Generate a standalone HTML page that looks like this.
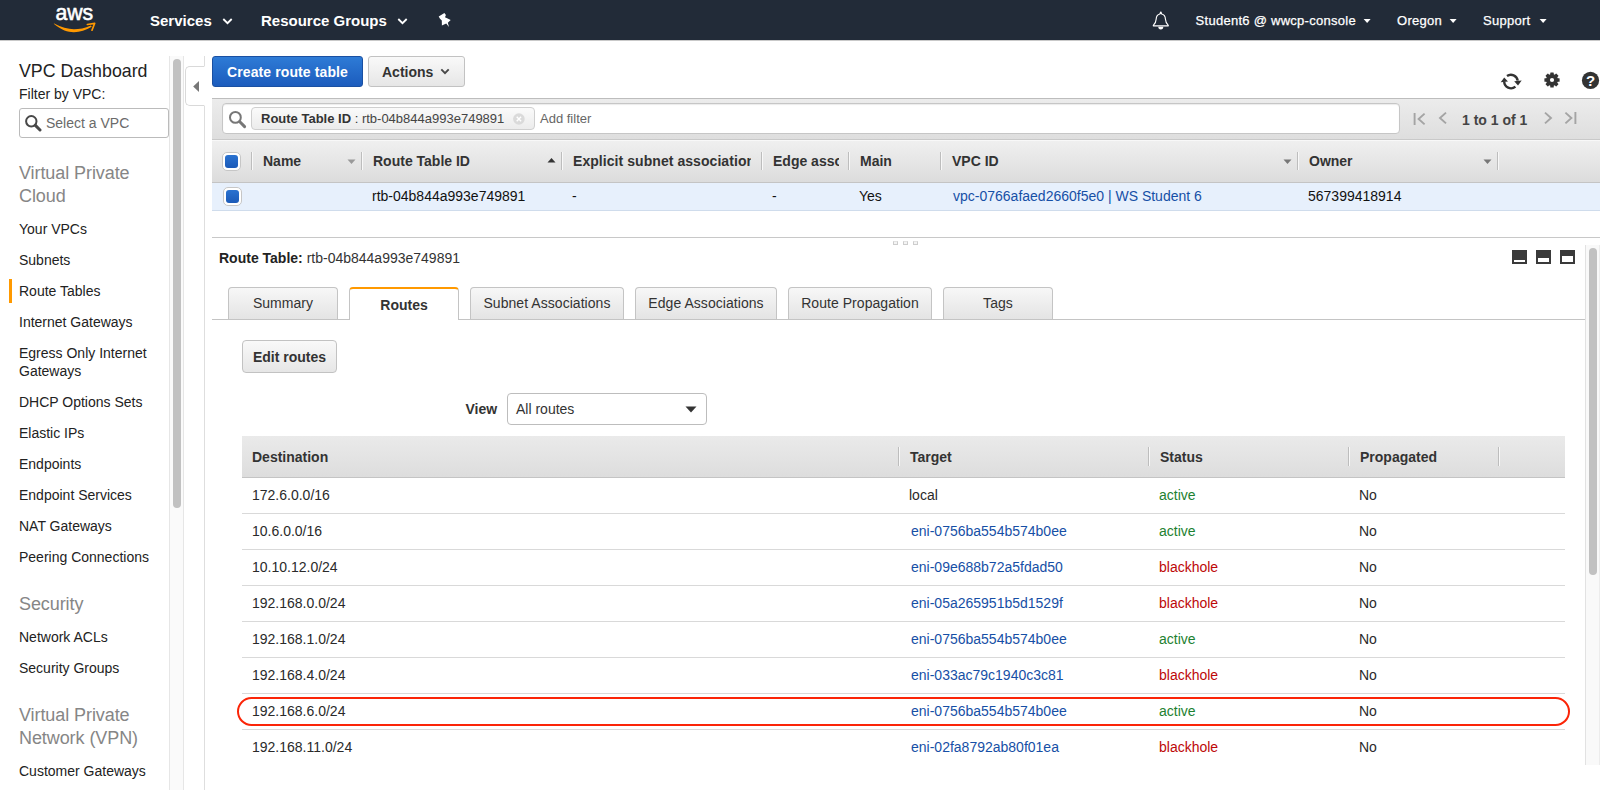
<!DOCTYPE html>
<html>
<head>
<meta charset="utf-8">
<title>VPC Route Tables</title>
<style>
*{box-sizing:border-box;margin:0;padding:0}
html,body{width:1600px;height:790px;overflow:hidden;background:#fff;font-family:"Liberation Sans",sans-serif;font-size:14px;color:#222}
.abs{position:absolute}
#nav{position:absolute;left:0;top:0;width:1600px;height:40px;background:#222b38;color:#fff}
#nav .t{position:absolute;top:12px;font-size:15px;font-weight:bold;color:#fff;white-space:nowrap}
#nav .r{position:absolute;top:13px;font-size:13px;color:#fff;white-space:nowrap;letter-spacing:0.27px;-webkit-text-stroke:0.25px #fff}
#nav svg{position:absolute}
/* sidebar */
#side{position:absolute;left:0;top:41px;width:169px;height:749px;background:#fff}
#side .h1{position:absolute;left:19px;font-size:17.8px;color:#222;white-space:nowrap}
#side .sec{position:absolute;left:19px;font-size:18px;line-height:23px;color:#868686;letter-spacing:-0.08px}
#side .it{position:absolute;left:19px;font-size:14px;line-height:17px;color:#222}
/* main */
.btn{position:absolute;border-radius:3px;font-weight:bold;font-size:14px;white-space:nowrap;text-align:center}
.th{position:absolute;top:153px;font-weight:bold;font-size:14px;color:#333;white-space:nowrap}
.td{position:absolute;top:188px;font-size:14px;color:#111;white-space:nowrap}
.sep{position:absolute;top:152px;width:1px;height:18px;background:#bdbdbd;box-shadow:1px 0 0 #f8f8f8}
.tab{letter-spacing:0.05px;position:absolute;top:287px;height:32px;border:1px solid #c4c4c4;border-bottom:none;border-radius:4px 4px 0 0;background:linear-gradient(#f7f7f7,#e4e4e4);font-size:14px;color:#333;text-align:center;line-height:30px;white-space:nowrap}
.rth{position:absolute;top:449px;font-weight:bold;font-size:14px;color:#333;white-space:nowrap}
.rrow{position:absolute;left:242px;width:1323px;height:36px;border-bottom:1px solid #d9d9d9}
.rrow span{position:absolute;top:9px;font-size:14px;white-space:nowrap;color:#2a2a2a}
.rrow .a{color:#164fa6}
.rrow .g{color:#1d8131}
.rrow .b{color:#bd0808}
</style>
</head>
<body>
<!-- NAV -->
<div id="nav">
  <svg style="left:50px;top:4px" width="50" height="32" viewBox="0 0 50 32">
    <text x="5.4" y="16.4" font-family="Liberation Sans, sans-serif" font-size="21.8" fill="#fff" stroke="#fff" stroke-width="0.55" textLength="37.8" lengthAdjust="spacingAndGlyphs">aws</text>
    <path d="M3.7 19.8 C 12 26.6, 18 28.3, 24 28.2 C 30 28.1, 36 26.2, 41.7 22.7 L 40.9 21.5 C 35 24.3, 29 25.3, 24 25.3 C 18 25.3, 11 23.5, 4.2 19.6 Z" fill="#f90"/>
    <path d="M37.4 20.5 L44.7 19.3 L42 26.2" fill="none" stroke="#f90" stroke-width="1.7" stroke-linecap="round" stroke-linejoin="round"/>
  </svg>
  <div class="t" style="left:150px">Services</div>
  <svg style="left:222px;top:17px" width="11" height="9" viewBox="0 0 11 9"><path d="M1.3 2 L5.5 6.2 L9.7 2" fill="none" stroke="#fff" stroke-width="1.8"/></svg>
  <div class="t" style="left:261px">Resource Groups</div>
  <svg style="left:397px;top:17px" width="11" height="9" viewBox="0 0 11 9"><path d="M1.3 2 L5.5 6.2 L9.7 2" fill="none" stroke="#fff" stroke-width="1.8"/></svg>
  <svg style="left:437px;top:12px" width="16" height="16" viewBox="0 0 16 16"><path d="M1.7 4.6 L7.4 1 L8.9 3 L8 5.2 L13.7 8 L10.8 10.8 L12 15 L9.2 11.4 L4.9 13.4 L4.8 8.6 L3 6.8 Z" fill="#fff"/></svg>

  <svg style="left:1152px;top:11px" width="18" height="19" viewBox="0 0 18 19"><path d="M8.8 2.1 C9.5 2.1 9.7 2.5 9.7 3 C12.2 3.5 13.3 5.4 13.4 8 C13.6 11.2 14.4 12.8 16.3 14.4 L16.3 14.8 L1.3 14.8 L1.3 14.4 C3.2 12.8 4 11.2 4.2 8 C4.3 5.4 5.4 3.5 7.9 3 C7.9 2.5 8.1 2.1 8.8 2.1 Z" fill="none" stroke="#fff" stroke-width="1.15" stroke-linejoin="round"/><circle cx="8.8" cy="1.5" r="0.9" fill="#fff"/><path d="M6.3 15.8 A2.5 2.7 0 0 0 11.3 15.8 Z" fill="#fff"/></svg>
  <div class="r" style="left:1195.6px">Student6 @ wwcp-console</div>
  <svg style="left:1362px;top:18px" width="10" height="6" viewBox="0 0 10 6"><path d="M1.6 1 L8.6 1 L5.1 5 Z" fill="#fff"/></svg>
  <div class="r" style="left:1397px">Oregon</div>
  <svg style="left:1448px;top:18px" width="10" height="6" viewBox="0 0 10 6"><path d="M1.6 1 L8.6 1 L5.1 5 Z" fill="#fff"/></svg>
  <div class="r" style="left:1483px">Support</div>
  <svg style="left:1538px;top:18px" width="10" height="6" viewBox="0 0 10 6"><path d="M1.6 1 L8.6 1 L5.1 5 Z" fill="#fff"/></svg>
</div>
<div class="abs" style="left:0;top:40px;width:1600px;height:1px;background:#c9c9c9"></div>

<!-- SIDEBAR -->
<div id="side">
  <div class="h1" style="top:20px">VPC Dashboard</div>
  <div class="it" style="top:45px;font-size:14px">Filter by VPC:</div>
  <div class="abs" style="left:19px;top:67px;width:150px;height:30px;border:1px solid #bbb;border-radius:3px;background:#fff"></div>
  <svg class="abs" style="left:24px;top:73px" width="18" height="18" viewBox="0 0 18 18"><circle cx="7.3" cy="7.3" r="5.2" fill="none" stroke="#484848" stroke-width="2"/><path d="M11.4 11.4 L16 16" stroke="#484848" stroke-width="3" stroke-linecap="round"/></svg>
  <div class="it" style="left:46px;top:74px;color:#6a6a6a">Select a VPC</div>

  <div class="sec" style="top:121px">Virtual Private<br>Cloud</div>
  <div class="it" style="top:180px">Your VPCs</div>
  <div class="it" style="top:211px">Subnets</div>
  <div class="abs" style="left:9px;top:238px;width:3px;height:24px;background:#f90"></div>
  <div class="it" style="top:242px">Route Tables</div>
  <div class="it" style="top:273px">Internet Gateways</div>
  <div class="it" style="top:303px;line-height:18px">Egress Only Internet<br>Gateways</div>
  <div class="it" style="top:353px">DHCP Options Sets</div>
  <div class="it" style="top:384px">Elastic IPs</div>
  <div class="it" style="top:415px">Endpoints</div>
  <div class="it" style="top:446px">Endpoint Services</div>
  <div class="it" style="top:477px">NAT Gateways</div>
  <div class="it" style="top:508px">Peering Connections</div>
  <div class="sec" style="top:552px">Security</div>
  <div class="it" style="top:588px">Network ACLs</div>
  <div class="it" style="top:619px">Security Groups</div>
  <div class="sec" style="top:663px">Virtual Private<br>Network (VPN)</div>
  <div class="it" style="top:721.7px">Customer Gateways</div>
</div>
<!-- sidebar borders / scrollbar -->
<div class="abs" style="left:169px;top:56px;width:15px;height:734px;background:#fafafa;border-left:1px solid #e6e6e6;border-right:1px solid #e6e6e6"></div>
<div class="abs" style="left:173px;top:59px;width:8px;height:449px;border-radius:4px;background:#c1c1c1"></div>
<div class="abs" style="left:204px;top:56px;width:1px;height:734px;background:#dedede"></div>
<div class="abs" style="left:185px;top:66px;width:20px;height:40px;border:1px solid #d9d9d9;border-right:1px solid #fff;border-radius:5px 0 0 5px;background:#fff"></div>
<svg class="abs" style="left:192px;top:80px" width="8" height="13" viewBox="0 0 8 13"><path d="M7 1 L7 12 L1.2 6.5 Z" fill="#777"/></svg>

<!-- MAIN -->

<!-- toolbar buttons -->
<div class="btn" style="left:212px;top:56px;width:151px;height:31px;background:linear-gradient(#2e7bd6,#1c5cbd);border:1px solid #1a50a2;color:#fff;line-height:31px;letter-spacing:0.1px">Create route table</div>
<div class="btn" style="left:368px;top:56px;width:97px;height:31px;background:linear-gradient(#f9f9f9,#e6e6e6);border:1px solid #c2c2c2;color:#333;line-height:31px;text-align:left;padding-left:13px">Actions</div>
<svg class="abs" style="left:439.5px;top:67.5px" width="10" height="8" viewBox="0 0 10 8"><path d="M1.3 1.3 L5 5.2 L8.7 1.3" fill="none" stroke="#484848" stroke-width="1.9"/></svg>

<!-- right icons -->
<svg class="abs" style="left:1499px;top:70px" width="24" height="22" viewBox="0 0 24 22">
  <path d="M8.0 6.0 A6.8 6.8 0 0 1 18.7 10.6" fill="none" stroke="#333" stroke-width="2.4"/>
  <path d="M5.2 11.6 A6.8 6.8 0 0 0 16.4 16.7" fill="none" stroke="#333" stroke-width="2.4"/>
  <path d="M15.2 11.2 L22.7 10.5 L19 15.4 Z" fill="#333"/>
  <path d="M1.7 12.2 L5.2 7.6 L9 11.6 Z" fill="#333"/>
</svg>
<svg class="abs" style="left:1543px;top:70.9px" width="18" height="18" viewBox="0 0 18 18">
  <g fill="#333" transform="translate(9,9)">
    <rect x="-1.75" y="-7.6" width="3.5" height="15.2" rx="0.5"/>
    <rect x="-1.75" y="-7.6" width="3.5" height="15.2" rx="0.5" transform="rotate(45)"/>
    <rect x="-1.75" y="-7.6" width="3.5" height="15.2" rx="0.5" transform="rotate(90)"/>
    <rect x="-1.75" y="-7.6" width="3.5" height="15.2" rx="0.5" transform="rotate(135)"/>
    <circle r="6"/>
    <circle r="2.1" fill="#fff"/>
  </g>
</svg>
<svg class="abs" style="left:1581px;top:71px" width="19" height="19" viewBox="0 0 19 19">
  <circle cx="9.5" cy="9.4" r="8.6" fill="#333"/>
  <text x="9.6" y="14.8" text-anchor="middle" font-family="Liberation Sans, sans-serif" font-weight="bold" font-size="15" fill="#fff">?</text>
</svg>

<!-- filter bar -->
<div class="abs" style="left:212px;top:98px;width:1388px;height:41px;border-top:1px solid #bdbdbd;background:linear-gradient(#ececec,#dedede)"></div>
<div class="abs" style="left:222px;top:103px;width:1178px;height:31px;border:1px solid #c6c6c6;border-radius:4px;background:#fff;box-shadow:inset 0 1px 1px rgba(0,0,0,.08)"></div>
<svg class="abs" style="left:228px;top:110px" width="19" height="19" viewBox="0 0 19 19"><circle cx="7.4" cy="7.4" r="5.4" fill="none" stroke="#777" stroke-width="2"/><path d="M11.8 11.8 L16.6 16.6" stroke="#777" stroke-width="3" stroke-linecap="round"/></svg>
<div class="abs" style="left:251px;top:107px;width:284px;height:23px;border:1px solid #cfcfcf;border-radius:4px;background:linear-gradient(#fafafa,#ececec)"></div>
<div class="abs" style="left:261px;top:111px;font-size:13px;color:#333;white-space:nowrap"><b>Route Table ID</b> : <span style="color:#444">rtb-04b844a993e749891</span></div>
<svg class="abs" style="left:512px;top:112px" width="14" height="14" viewBox="0 0 14 14"><circle cx="6.9" cy="7" r="5.8" fill="#dadada"/><path d="M4.7 4.8 L9.1 9.2 M9.1 4.8 L4.7 9.2" stroke="#fff" stroke-width="1.4"/></svg>
<div class="abs" style="left:540px;top:111px;font-size:13px;color:#666;white-space:nowrap">Add filter</div>

<!-- pagination -->
<svg class="abs" style="left:1412px;top:110.5px" width="16" height="16" viewBox="0 0 16 16"><path d="M2.6 2 L2.6 14 M12.6 2.6 L6.6 8 L12.6 13.4" fill="none" stroke="#a4a4a4" stroke-width="1.9"/></svg>
<svg class="abs" style="left:1435px;top:110px" width="16" height="16" viewBox="0 0 16 16"><path d="M11 2.6 L5 8 L11 13.4" fill="none" stroke="#a4a4a4" stroke-width="1.9"/></svg>
<div class="abs" style="left:1462px;top:111.5px;font-size:14px;font-weight:bold;color:#444;white-space:nowrap">1 to 1 of 1</div>
<svg class="abs" style="left:1540px;top:110px" width="16" height="16" viewBox="0 0 16 16"><path d="M5 2.6 L11 8 L5 13.4" fill="none" stroke="#a4a4a4" stroke-width="1.9"/></svg>
<svg class="abs" style="left:1562px;top:110px" width="16" height="16" viewBox="0 0 16 16"><path d="M13.4 2 L13.4 14 M3.4 2.6 L9.4 8 L3.4 13.4" fill="none" stroke="#a4a4a4" stroke-width="1.9"/></svg>

<!-- table header -->
<div class="abs" style="left:212px;top:139px;width:1388px;height:44px;border-top:1px solid #c9c9c9;border-bottom:1px solid #c4c4c4;background:linear-gradient(#f0f0f0,#dcdcdc);box-shadow:inset 0 1px 0 #f8f8f8"></div>
<div class="abs" style="left:222px;top:152px;width:19px;height:19px;border:1px solid #c6c6c6;border-radius:5px;background:#fff"></div>
<div class="abs" style="left:225px;top:155px;width:13px;height:13px;border-radius:3px;background:linear-gradient(#2a72d0,#1b5ab8)"></div>
<div class="sep" style="left:251px"></div>
<div class="th" style="left:263px">Name</div>
<svg class="abs" style="left:347.3px;top:158.5px" width="9" height="6" viewBox="0 0 9 6"><path d="M0.5 0.5 L8.5 0.5 L4.5 5 Z" fill="#999"/></svg>
<div class="sep" style="left:361px"></div>
<div class="th" style="left:373px">Route Table ID</div>
<svg class="abs" style="left:547px;top:157px" width="9" height="6" viewBox="0 0 9 6"><path d="M0.5 5.5 L8.5 5.5 L4.5 1 Z" fill="#333"/></svg>
<div class="sep" style="left:561px"></div>
<div class="th" style="left:573px;width:177.5px;overflow:hidden;letter-spacing:0.06px">Explicit subnet association</div>
<div class="sep" style="left:761px"></div>
<div class="th" style="left:773px;width:66px;overflow:hidden">Edge associations</div>
<div class="sep" style="left:848px"></div>
<div class="th" style="left:860px">Main</div>
<div class="sep" style="left:940px"></div>
<div class="th" style="left:952px">VPC ID</div>
<svg class="abs" style="left:1283px;top:158.5px" width="9" height="6" viewBox="0 0 9 6"><path d="M0.5 0.5 L8.5 0.5 L4.5 5 Z" fill="#777"/></svg>
<div class="sep" style="left:1297px"></div>
<div class="th" style="left:1309px">Owner</div>
<svg class="abs" style="left:1483px;top:158.5px" width="9" height="6" viewBox="0 0 9 6"><path d="M0.5 0.5 L8.5 0.5 L4.5 5 Z" fill="#777"/></svg>
<div class="sep" style="left:1497px"></div>

<!-- selected row -->
<div class="abs" style="left:212px;top:183px;width:1388px;height:28px;background:#e7f0fc;border-bottom:1px solid #cfdcec"></div>
<div class="abs" style="left:223px;top:187px;width:19px;height:19px;border:1px solid #c6c6c6;border-radius:5px;background:#fff"></div>
<div class="abs" style="left:226px;top:190px;width:13px;height:13px;border-radius:3px;background:linear-gradient(#2a72d0,#1b5ab8)"></div>
<div class="td" style="left:372px">rtb-04b844a993e749891</div>
<div class="td" style="left:572px">-</div>
<div class="td" style="left:772px">-</div>
<div class="td" style="left:859px">Yes</div>
<div class="td" style="left:953px;color:#164fa6">vpc-0766afaed2660f5e0 | WS Student 6</div>
<div class="td" style="left:1308px">567399418914</div>

<!-- splitter -->
<div class="abs" style="left:212px;top:237px;width:1388px;height:1px;background:#c8c8c8"></div>
<div class="abs" style="left:893px;top:241px;width:5px;height:4px;border:1px solid #cdcdcd;border-top-color:#e2e2e2;background:#f4f4f4"></div>
<div class="abs" style="left:903px;top:241px;width:5px;height:4px;border:1px solid #cdcdcd;border-top-color:#e2e2e2;background:#f4f4f4"></div>
<div class="abs" style="left:913px;top:241px;width:5px;height:4px;border:1px solid #cdcdcd;border-top-color:#e2e2e2;background:#f4f4f4"></div>


<!-- detail header -->
<div class="abs" style="left:219px;top:250px;font-size:14px;color:#333;white-space:nowrap"><b style="color:#222">Route Table:</b> rtb-04b844a993e749891</div>
<svg class="abs" style="left:1512px;top:250px" width="64" height="16" viewBox="0 0 64 16">
  <rect x="0" y="0" width="15" height="14" fill="#3a3a3a"/><rect x="2" y="10" width="11" height="2" fill="#fff"/>
  <rect x="24" y="0" width="15" height="14" fill="#3a3a3a"/><rect x="26" y="8" width="11" height="4" fill="#fff"/>
  <rect x="48" y="0" width="15" height="14" fill="#3a3a3a"/><rect x="50" y="6" width="11" height="6" fill="#fff"/>
</svg>

<!-- tabs -->
<div class="abs" style="left:212px;top:319px;width:1373px;height:1px;background:#c4c4c4"></div>
<div class="tab" style="left:228px;width:110px">Summary</div>
<div class="tab" style="left:470px;width:154px">Subnet Associations</div>
<div class="tab" style="left:635px;width:142px">Edge Associations</div>
<div class="tab" style="left:788px;width:144px">Route Propagation</div>
<div class="tab" style="left:943px;width:110px">Tags</div>
<div class="abs" style="left:349px;top:287px;width:110px;height:33px;border:1px solid #c4c4c4;border-top:2px solid #f90;border-bottom:none;border-radius:4px 4px 0 0;background:#fff;font-size:14px;font-weight:bold;color:#333;text-align:center;line-height:33px">Routes</div>

<!-- edit routes -->
<div class="btn" style="left:242px;top:340px;width:95px;height:33px;background:linear-gradient(#f9f9f9,#e6e6e6);border:1px solid #c2c2c2;border-radius:4px;color:#333;line-height:32.5px">Edit routes</div>

<!-- view select -->
<div class="abs" style="left:465.5px;top:401px;font-size:14px;font-weight:bold;color:#333">View</div>
<div class="abs" style="left:507px;top:393px;width:200px;height:32px;border:1px solid #bdbdbd;border-radius:4px;background:#fff"></div>
<div class="abs" style="left:516px;top:401px;font-size:14px;color:#333">All routes</div>
<svg class="abs" style="left:685px;top:406px" width="12" height="7" viewBox="0 0 12 7"><path d="M0.5 0.5 L11.5 0.5 L6 6.5 Z" fill="#333"/></svg>

<!-- routes table -->
<div class="abs" style="left:242px;top:436px;width:1323px;height:42px;border-bottom:1px solid #c4c4c4;background:linear-gradient(#eaeaea,#dddddd)"></div>
<div class="rth" style="left:252px">Destination</div>
<div class="sep" style="left:898px;top:447px;height:19px"></div>
<div class="rth" style="left:910px">Target</div>
<div class="sep" style="left:1148px;top:447px;height:19px"></div>
<div class="rth" style="left:1160px">Status</div>
<div class="sep" style="left:1348px;top:447px;height:19px"></div>
<div class="rth" style="left:1360px">Propagated</div>
<div class="sep" style="left:1498px;top:447px;height:19px"></div>
<div class="rrow" style="top:478px"><span style="left:10px">172.6.0.0/16</span><span class="" style="left:667px">local</span><span class="g" style="left:917px">active</span><span style="left:1117px">No</span></div>
<div class="rrow" style="top:514px"><span style="left:10px">10.6.0.0/16</span><span class="a" style="left:669px">eni-0756ba554b574b0ee</span><span class="g" style="left:917px">active</span><span style="left:1117px">No</span></div>
<div class="rrow" style="top:550px"><span style="left:10px">10.10.12.0/24</span><span class="a" style="left:669px">eni-09e688b72a5fdad50</span><span class="b" style="left:917px">blackhole</span><span style="left:1117px">No</span></div>
<div class="rrow" style="top:586px"><span style="left:10px">192.168.0.0/24</span><span class="a" style="left:669px">eni-05a265951b5d1529f</span><span class="b" style="left:917px">blackhole</span><span style="left:1117px">No</span></div>
<div class="rrow" style="top:622px"><span style="left:10px">192.168.1.0/24</span><span class="a" style="left:669px">eni-0756ba554b574b0ee</span><span class="g" style="left:917px">active</span><span style="left:1117px">No</span></div>
<div class="rrow" style="top:658px"><span style="left:10px">192.168.4.0/24</span><span class="a" style="left:669px">eni-033ac79c1940c3c81</span><span class="b" style="left:917px">blackhole</span><span style="left:1117px">No</span></div>
<div class="rrow" style="top:694px"><span style="left:10px">192.168.6.0/24</span><span class="a" style="left:669px">eni-0756ba554b574b0ee</span><span class="g" style="left:917px">active</span><span style="left:1117px">No</span></div>
<div class="rrow" style="top:730px;border-bottom:none"><span style="left:10px">192.168.11.0/24</span><span class="a" style="left:669px">eni-02fa8792ab80f01ea</span><span class="b" style="left:917px">blackhole</span><span style="left:1117px">No</span></div>

<!-- red highlight -->
<div class="abs" style="left:236.6px;top:696.6px;width:1333.6px;height:29.6px;border:2.4px solid #fb2508;border-radius:15px"></div>

<!-- right scrollbar of detail pane -->
<div class="abs" style="left:1585px;top:245px;width:15px;height:520px;background:#f9f9f9;border-left:1px solid #e2e2e2;border-right:1px solid #ececec"></div>
<div class="abs" style="left:1589px;top:248px;width:8px;height:327px;border-radius:4px;background:#c1c1c1"></div>
<!-- bottom cut -->
<div class="abs" style="left:205px;top:765px;width:1395px;height:25px;background:#fff"></div>

</body>
</html>
